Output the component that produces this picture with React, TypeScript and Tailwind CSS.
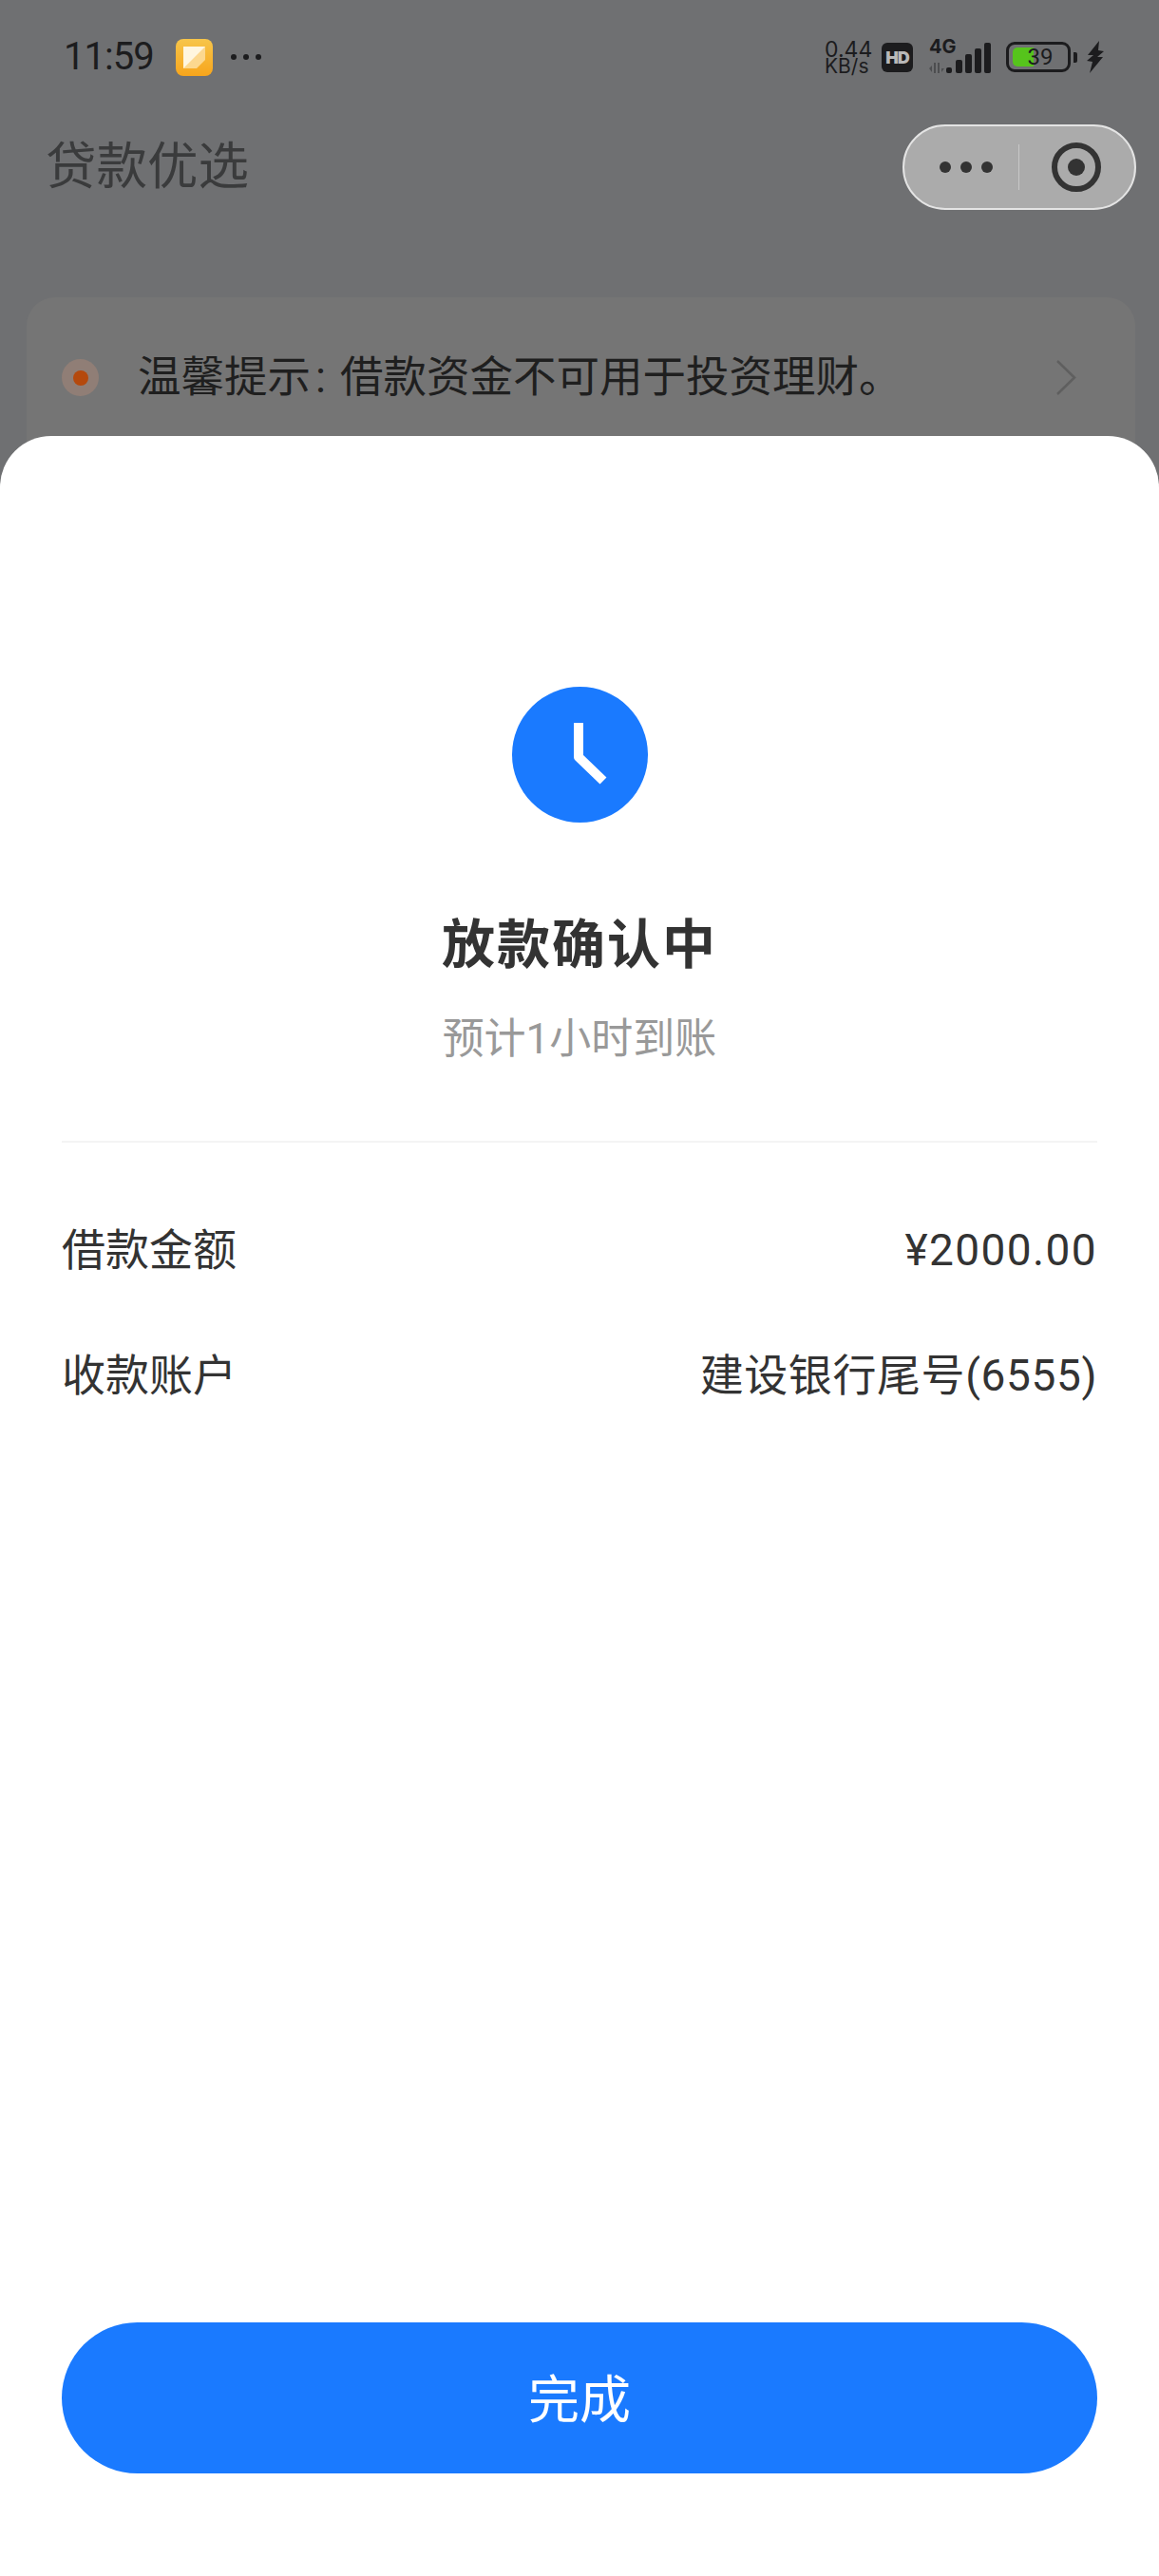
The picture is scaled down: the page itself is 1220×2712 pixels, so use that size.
const cjk = "font-['Roboto','Noto_Sans_CJK_SC',sans-serif]";

const StatusBar = () => (
    <div className="h-[120px] flex items-center justify-between pl-[67px] pr-[58px] text-[#1c1c1e]">
        <div className="flex items-center">
            <span className="w-[94px] text-[40px] leading-none font-['Roboto',sans-serif] tracking-[-1px]">11:59</span>
            <svg width="39" height="39" viewBox="0 0 39 39" className="ml-[24px]">
                <defs>
                    <linearGradient id="noteBg" x1="0" y1="0" x2="0" y2="1">
                        <stop offset="0" stopColor="#f7c54a" />
                        <stop offset="1" stopColor="#f7a51c" />
                    </linearGradient>
                </defs>
                <rect width="39" height="39" rx="8" fill="url(#noteBg)" />
                <path d="M8 8h23v14l-9 9H8z" fill="#fcd88f" />
                <path d="M8 8h23L8 31z" fill="#fff6df" />
            </svg>
            <div className="ml-[19px] flex gap-[7px]">
                <span className="w-[6px] h-[6px] rounded-full bg-[#1c1c1e]" />
                <span className="w-[6px] h-[6px] rounded-full bg-[#1c1c1e]" />
                <span className="w-[6px] h-[6px] rounded-full bg-[#1c1c1e]" />
            </div>
        </div>
        <div className="flex items-center">
            <div className="flex flex-col font-['Inter',sans-serif] leading-[18px] w-[52px] pt-[2px]">
                <span className="text-[23px]">0.44</span>
                <span className="text-[21px]">KB/s</span>
            </div>
            <div className="ml-[8px] w-[33px] h-[31px] rounded-[6px] bg-[#1c1c1e] flex items-center justify-center text-[#b9b9b9] text-[18px] font-black font-['Inter',sans-serif] tracking-[-1px]">
                HD
            </div>
            <div className="ml-[14px] relative w-[69px] h-[35px]">
                <span className="absolute left-[3px] top-[-4px] text-[20px] leading-[20px] font-bold font-['Inter',sans-serif]">4G</span>
                <svg width="69" height="35" viewBox="0 0 69 35" className="absolute left-0 top-0">
                    <path d="M3 29l3-3v7zM8 23h2v11H8zM12 23h2v11h-2zM16 33l3-4h-3z" fill="#4d4e50" />
                    <rect x="21" y="28" width="6" height="6" rx="2" fill="#1c1c1e" />
                    <rect x="31" y="20" width="7" height="14" rx="2" fill="#1c1c1e" />
                    <rect x="41" y="14" width="7" height="20" rx="2" fill="#1c1c1e" />
                    <rect x="51" y="8" width="7" height="26" rx="2" fill="#1c1c1e" />
                    <rect x="61" y="2" width="7" height="32" rx="2" fill="#1c1c1e" />
                </svg>
            </div>
            <div className="ml-[15px] relative w-[68px] h-[32px] rounded-[9px] border-[3px] border-[#1c1c1e] flex items-center justify-center">
                <div className="absolute left-[4px] top-[3px] bottom-[3px] w-[22px] rounded-l-[5px] bg-[#56c41c]" />
                <span className="relative text-[24px] leading-none ml-[4px] font-['Roboto',sans-serif]">39</span>
            </div>
            <div className="ml-[3px] w-[4px] h-[11px] rounded-r-[2px] bg-[#1c1c1e]" />
            <svg width="19" height="34" viewBox="0 0 19 34" className="ml-[9px]">
                <path d="M14 0L2 15l6 0-7 6 6 1-3 12L18 17l-6 0 7-6-6-1z" fill="#1c1c1e" />
            </svg>
        </div>
    </div>
);

const NavBar = () => (
    <div className="mt-[11px] h-[90px] flex items-center justify-between pl-[48px] pr-[24px]">
        <h1 className="text-[53.5px] leading-none text-[#3a3b3c] font-normal">贷款优选</h1>
        <div className="w-[246px] h-[90px] rounded-full bg-[#ababab] border-2 border-[#e4e4e4] flex items-center">
            <div className="w-[120px] pl-[37px] flex items-center gap-[10px]">
                <span className="w-[12px] h-[12px] rounded-full bg-[#333333]" />
                <span className="w-[12px] h-[12px] rounded-full bg-[#333333]" />
                <span className="w-[12px] h-[12px] rounded-full bg-[#333333]" />
            </div>
            <div className="w-[1px] h-[48px] bg-[#c8c8c8]" />
            <div className="flex-1 flex justify-center pr-[1px]">
                <div className="w-[52px] h-[52px] rounded-full border-[6px] border-[#333333] flex items-center justify-center">
                    <span className="w-[18px] h-[18px] rounded-full bg-[#333333]" />
                </div>
            </div>
        </div>
    </div>
);

const Notice = () => (
    <div className="mt-[92px] ml-[28px] mr-[25px] h-[200px] rounded-[30px] bg-[#757575] pt-[52px] pl-[37px] pr-[62px]">
        <div className="h-[65px] flex items-center">
            <div className="w-[39px] h-[39px] rounded-full bg-[#907e76] flex items-center justify-center">
                <span className="w-[16px] h-[16px] rounded-full bg-[#b5490d]" />
            </div>
            <p className="ml-[41px] flex-1 text-[45.5px] leading-none text-[#1f1f1f]">
                温馨提示<span className="ml-[5px] mr-[15px]">:</span>借款资金不可用于投资理财。
            </p>
            <svg width="22" height="37" viewBox="0 0 22 37" fill="none">
                <path d="M2 1l18 17.5L2 36" stroke="#5f5f5f" strokeWidth="2.5" />
            </svg>
        </div>
    </div>
);

const InfoRow = ({label, value, valueClass}: {label: string; value: string; valueClass: string}) => (
    <div className="h-[132px] flex items-center justify-between text-[46px] leading-none text-[#333333]">
        <span>{label}</span>
        <span className={valueClass}>{value}</span>
    </div>
);

const Sheet = () => (
    <div className="absolute inset-x-0 top-[459px] bottom-0 bg-white rounded-t-[54px] px-[65px] flex flex-col">
        <div className="mt-[264px] self-center w-[143px] h-[143px] rounded-full bg-[#1a7aff] flex items-center justify-center">
            <svg width="143" height="143" viewBox="0 0 143 143" fill="none">
                <path d="M70 38v36l26 25" stroke="#ffffff" strokeWidth="10" strokeLinejoin="round" />
            </svg>
        </div>
        <h2 className="mt-[98px] text-center text-[56px] leading-[62px] font-bold text-[#333333] tracking-[2px]">放款确认中</h2>
        <p className="mt-[43px] text-center text-[44px] leading-[50px] text-[#999999]">预计1小时到账</p>
        <div className="mt-[82px] h-[2px] bg-[#f4f4f4]" />
        <div className="mt-[47px]">
            <InfoRow label="借款金额" value="¥2000.00" valueClass="tracking-[1.4px]" />
            <InfoRow label="收款账户" value="建设银行尾号(6555)" valueClass="tracking-[0.6px]" />
        </div>
        <button className="mt-auto mb-[108px] h-[159px] pt-[6px] rounded-full bg-[#1a7aff] text-white text-[54px]">完成</button>
    </div>
);

const App = () => {
    return (
        <div className={`relative w-[1220px] h-[2712px] overflow-hidden bg-[#6f7072] ${cjk}`}>
            <StatusBar />
            <NavBar />
            <Notice />
            <Sheet />
        </div>
    );
};

export default App;
